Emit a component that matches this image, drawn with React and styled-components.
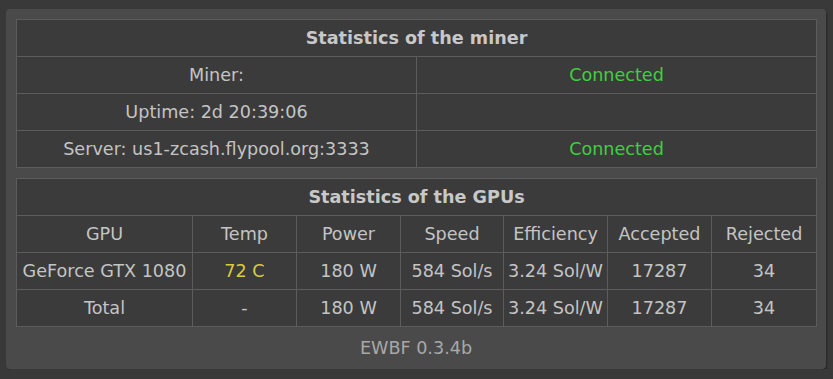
import React from "react";
import styled, { createGlobalStyle } from "styled-components";

const Global = createGlobalStyle`
  html, body { margin: 0; padding: 0; background: #393939; }
  body { font-family: "DejaVu Sans", Verdana, sans-serif; }
`;

const Panel = styled.div`
  margin: 9px 0 0 6px;
  width: 820px;
  box-sizing: border-box;
  padding: 10px 10px 0 10px;
  background: #4a4a4a;
  border-radius: 4px;
  box-shadow: 1px 2px 2px rgba(0,0,0,0.35);
  display: flex;
  flex-direction: column;
  gap: 10px;
`;

const Table = styled.table`
  width: 800px;
  border-collapse: collapse;
  table-layout: fixed;
  background: #3b3b3b;
  font-size: 17.6px;
  color: #c4c4c4;
`;

const HeadCell = styled.th`
  border: 1px solid #5c5c5c;
  height: 36px;
  padding: 0;
  font-weight: bold;
  text-align: center;
  color: #c8c8c8;
`;

const Cell = styled.td`
  border: 1px solid #5c5c5c;
  height: 36px;
  padding: 0;
  text-align: center;
  white-space: nowrap;
  color: ${(p) =>
    p.$tone === "ok" ? "#3fcf3f" : p.$tone === "warm" ? "#d8cc3a" : "#c4c4c4"};
`;

const Footer = styled.div`
  height: 42px;
  margin-top: -10px;
  display: flex;
  align-items: center;
  justify-content: center;
  font-size: 17.6px;
  color: #a8a8a8;
`;

const gpuCols = [176, 104, 104, 103, 104, 104, 105];
const gpuHead = ["GPU", "Temp", "Power", "Speed", "Efficiency", "Accepted", "Rejected"];
const gpuRows = [
  ["GeForce GTX 1080", "72 C", "180 W", "584 Sol/s", "3.24 Sol/W", "17287", "34"],
  ["Total", "-", "180 W", "584 Sol/s", "3.24 Sol/W", "17287", "34"],
];

export default function App() {
  return (
    <>
      <Global />
      <Panel>
        <Table>
          <colgroup>
            <col style={{ width: 400 }} />
            <col style={{ width: 400 }} />
          </colgroup>
          <thead>
            <tr>
              <HeadCell colSpan={2}>Statistics of the miner</HeadCell>
            </tr>
          </thead>
          <tbody>
            <tr>
              <Cell>Miner:</Cell>
              <Cell $tone="ok">Connected</Cell>
            </tr>
            <tr>
              <Cell>Uptime: 2d 20:39:06</Cell>
              <Cell></Cell>
            </tr>
            <tr>
              <Cell>Server: us1-zcash.flypool.org:3333</Cell>
              <Cell $tone="ok">Connected</Cell>
            </tr>
          </tbody>
        </Table>
        <Table>
          <colgroup>
            {gpuCols.map((w, i) => (
              <col key={i} style={{ width: w }} />
            ))}
          </colgroup>
          <thead>
            <tr>
              <HeadCell colSpan={7}>Statistics of the GPUs</HeadCell>
            </tr>
          </thead>
          <tbody>
            <tr>
              {gpuHead.map((h) => (
                <Cell key={h}>{h}</Cell>
              ))}
            </tr>
            {gpuRows.map((r, ri) => (
              <tr key={ri}>
                {r.map((v, i) => (
                  <Cell key={i} $tone={ri === 0 && i === 1 ? "warm" : undefined}>
                    {v}
                  </Cell>
                ))}
              </tr>
            ))}
          </tbody>
        </Table>
        <Footer>EWBF 0.3.4b</Footer>
      </Panel>
    </>
  );
}
